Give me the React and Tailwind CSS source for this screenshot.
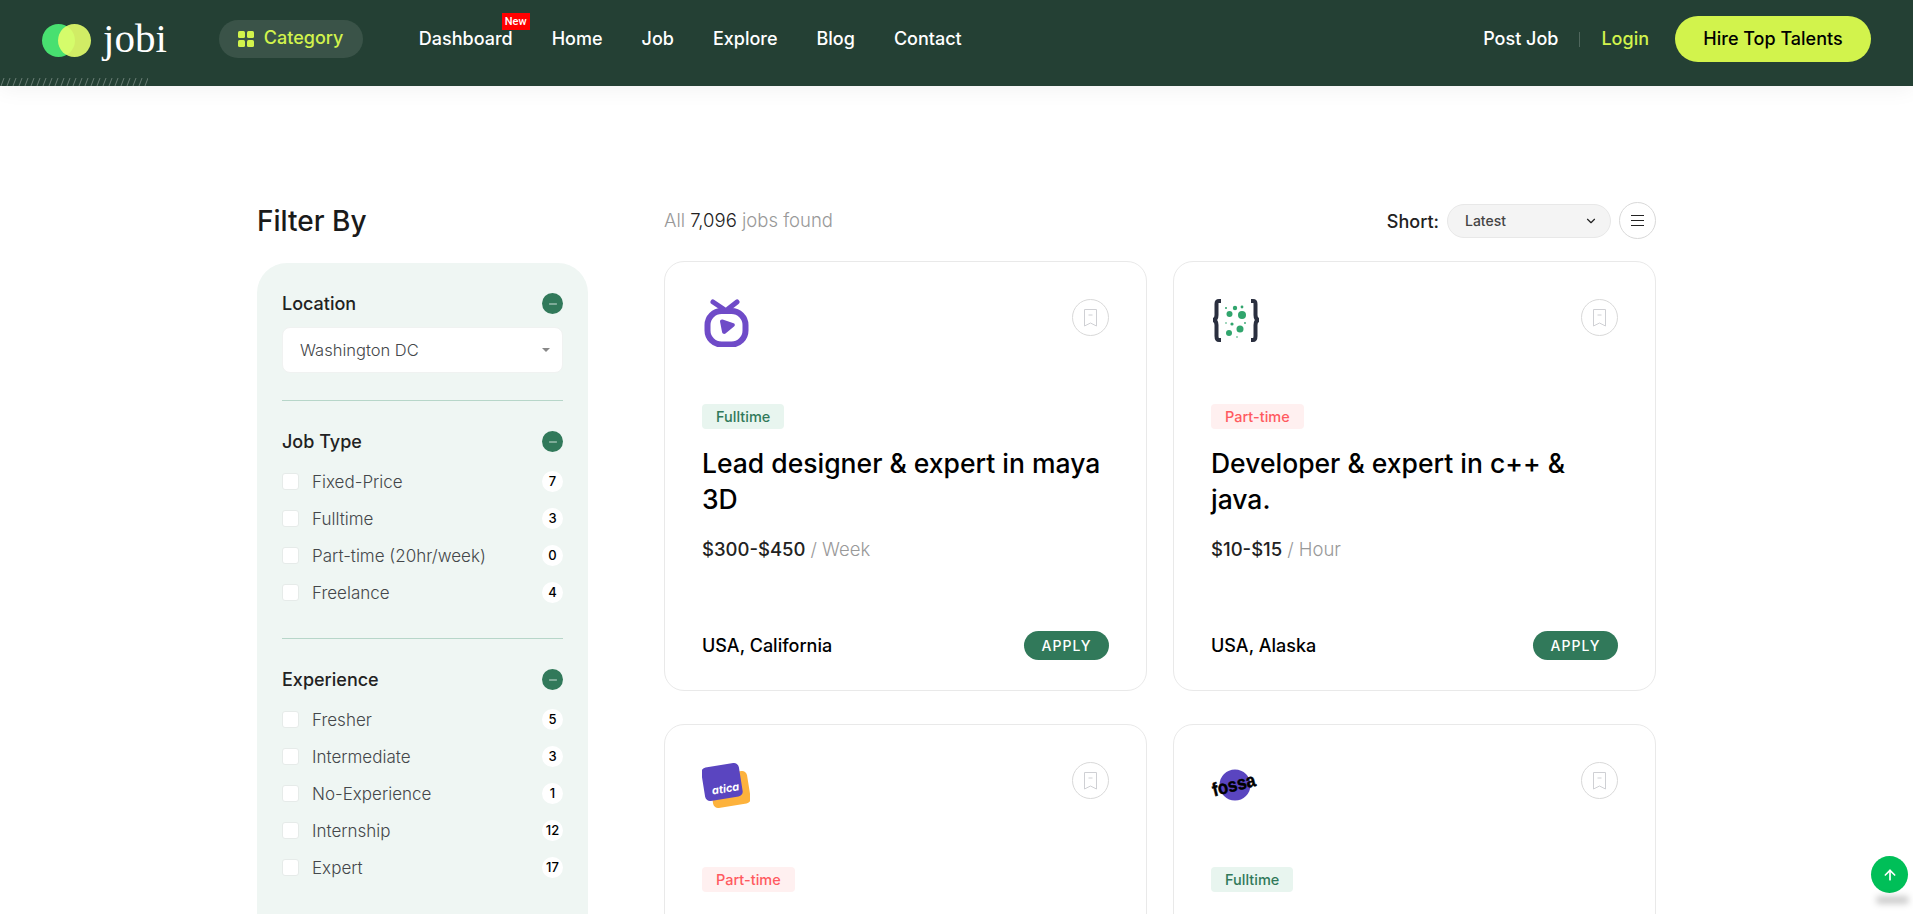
import React from "react";
import { ChevronDown, ArrowUp, Minus } from "lucide-react";

const NAV = ["Home", "Job", "Explore", "Blog", "Contact"];
const JOB_TYPES = [
  { label: "Fixed-Price", count: 7 },
  { label: "Fulltime", count: 3 },
  { label: "Part-time (20hr/week)", count: 0 },
  { label: "Freelance", count: 4 },
];
const EXPERIENCE = [
  { label: "Fresher", count: 5 },
  { label: "Intermediate", count: 3 },
  { label: "No-Experience", count: 1 },
  { label: "Internship", count: 12 },
  { label: "Expert", count: 17 },
];

const TvLogo = () => (
  <svg width="46" height="48" viewBox="0 0 46 48" fill="none">
    <path d="M9 3l12 8M33 3l-9 7" stroke="#6F4BC8" strokeWidth="5" strokeLinecap="round" />
    <rect x="3.500" y="12" width="38" height="33.500" rx="14" stroke="#6F4BC8" strokeWidth="6" />
    <path d="M16 22.500c0-1.500 1.200-2.300 2.600-1.900l11 3.600c1.500.5 1.700 2.400.4 3.300l-8.500 7c-1.300.9-3 .2-3.400-1.300z" fill="#6F4BC8" />
  </svg>
);

const CodeLogo = () => (
  <svg width="50" height="44" viewBox="0 0 50 44" fill="none">
    <path d="M10 2H8C6 2 5.500 3 5.500 5v11c0 3-1 4.500-3 5 2 .5 3 2 3 5v11c0 2 .5 4 2.500 4h2" stroke="#2A2F3F" strokeWidth="4" />
    <path d="M40 2h2c2 0 2.500 1 2.500 3v11c0 3 1 4.500 3 5-2 .5-3 2-3 5v11c0 2-.5 4-2.500 4h-2" stroke="#2A2F3F" strokeWidth="4" />
    <g fill="#31A56D">
      <circle cx="18.500" cy="15" r="3" />
      <circle cx="24" cy="9" r="2.200" />
      <circle cx="31" cy="16" r="4" />
      <circle cx="31" cy="8" r="1.400" />
      <circle cx="15" cy="9" r="1" />
      <circle cx="21" cy="25" r="1.600" />
      <circle cx="29" cy="30" r="3.500" />
      <circle cx="18" cy="34" r="3" />
      <circle cx="15" cy="24" r="0.800" />
      <circle cx="34" cy="24" r="0.900" />
      <circle cx="26" cy="38" r="0.800" />
    </g>
  </svg>
);

const AticaLogo = () => (
  <svg width="48" height="47" viewBox="0 0 48 47">
    <rect x="9" y="11" width="38" height="33" rx="5" fill="#FDB23C" transform="rotate(-9 28 27)" />
    <rect x="1" y="3" width="38" height="34" rx="5" fill="#5A45C0" transform="rotate(-9 20 20)" />
    <text x="10" y="31" fontSize="11" fontWeight="700" fontStyle="italic" fill="#fff" transform="rotate(-9 20 28)">atica</text>
  </svg>
);

const FossaLogo = () => (
  <svg width="56" height="48" viewBox="-4 -7 56 48">
    <circle cx="24" cy="16" r="15.500" fill="#5A45C0" />
    <text x="1" y="22" fontSize="19" fontWeight="900" fontFamily="Liberation Sans" textLength="44" lengthAdjust="spacingAndGlyphs" fill="#000" stroke="#000" strokeWidth="0.500" transform="rotate(-14 24 17)">fossa</text>
  </svg>
);

const CARDS = [
  { logo: <TvLogo />, tag: "Fulltime", title: "Lead designer & expert in maya 3D", pay: "$300-$450", per: "Week", place: "USA, California", offset: "pl-[2px]" },
  { logo: <CodeLogo />, tag: "Part-time", title: "Developer & expert in c++ & java.", pay: "$10-$15", per: "Hour", place: "USA, Alaska" },
  { logo: <AticaLogo />, tag: "Part-time" },
  { logo: <FossaLogo />, tag: "Fulltime", offset: "-ml-[4px]" },
];

const Toggle = () => (
  <span className="flex h-[21px] w-[21px] items-center justify-center rounded-full bg-[#31795a] text-white">
    <Minus size={12} strokeWidth={1.500} />
  </span>
);

const FilterHead = ({ title }) => (
  <div className="flex h-[21px] items-center justify-between">
    <span className="pb-px text-[18px] font-medium text-[#222]">{title}</span>
    <Toggle />
  </div>
);

const FilterRows = ({ rows }) => (
  <div className="mt-[19px] flex flex-col gap-[16px]">
    {rows.map((row) => (
      <div key={row.label} className="flex h-[21px] items-center">
        <span className="h-[17px] w-[17px] rounded-[3px] border border-[#e6ebe9] bg-white" />
        <span className="ml-[13px] pt-px text-[17px] font-light leading-[21px] text-[#44474a]">{row.label}</span>
        <span className="ml-auto flex h-[21px] w-[21px] items-center justify-center rounded-full bg-white text-[13px] font-medium text-black">
          {row.count}
        </span>
      </div>
    ))}
  </div>
);

const JobCard = ({ job }) => {
  const isFull = job.tag === "Fulltime";
  return (
    <div className="flex h-[430px] flex-col rounded-[20px] border border-[#e9e9e9] bg-white px-[37px] pb-[30px] pt-[37px]">
      <div className="flex h-[105px] items-start justify-between">
        <div className={job.offset}>{job.logo}</div>
        <span className="flex h-[37px] w-[37px] items-center justify-center rounded-full border border-[#d9d9d9]">
          <svg width="13" height="18" viewBox="0 0 13 18" fill="none" stroke="#cfd0d4">
            <path d="M.5.500h12v16.500l-6-3-6 3z" />
            <path d="M4.500 6h4" />
          </svg>
        </span>
      </div>
      <span
        className={`flex h-[25px] w-fit items-center rounded-[4px] px-[14px] text-[14.500px] font-medium ${
          isFull ? "bg-[#e8f5ef] text-[#31795a]" : "bg-[#fff0f0] text-[#ff5a5f]"
        }`}
      >
        {job.tag}
      </span>
      {job.title && (
        <>
          <h3 className="mt-[16px] text-[26.500px] font-medium leading-[36px] text-black">{job.title}</h3>
          <p className="mt-[20px] text-[18.500px] font-medium leading-[24px] text-[#222]">
            {job.pay} <span className="font-light text-[#999]">/ {job.per}</span>
          </p>
          <div className="mt-auto flex items-center justify-between">
            <span className="text-[18px] font-medium text-black">{job.place}</span>
            <span className="flex h-[29px] w-[85px] items-center justify-center rounded-full bg-[#31795a] text-[14px] font-medium tracking-[1px] text-white">
              APPLY
            </span>
          </div>
        </>
      )}
    </div>
  );
};

export default function App() {
  return (
    <div className="relative h-screen overflow-hidden bg-white font-[Inter,sans-serif] text-[#222]">
      {/* Header */}
      <header className="relative z-10 flex h-[86px] items-center bg-[#244034] pb-[8px] pl-[42px] pr-[42px] shadow-[0_4px_20px_rgba(0,0,0,0.05)]">
        <div className="flex items-center">
          <div className="flex pt-[3px]">
            <span className="h-[33px] w-[33px] rounded-full bg-[#48e070]" />
            <span className="-ml-[17px] h-[33px] w-[33px] rounded-full bg-[#e4ff6a]/90" />
          </div>
          <span className="-mt-[2px] ml-[12px] font-['Liberation_Serif',serif] text-[41px] leading-none text-white">jobi</span>
        </div>
        <div className="ml-[52px] flex h-[38px] w-[144px] items-center rounded-full bg-[#3a5348] pl-[19px] text-[18px] font-medium text-[#d2f34c]">
          <svg width="16" height="16" viewBox="0 0 16 16" fill="#d2f34c">
            <rect width="7" height="7" rx="1.500" />
            <rect x="9" width="7" height="7" rx="1.500" />
            <rect y="9" width="7" height="7" rx="1.500" />
            <rect x="9" y="9" width="7" height="7" rx="1.500" />
          </svg>
          <span className="ml-[10px] pb-[3px]">Category</span>
        </div>
        <nav className="ml-[56px] flex items-center gap-[39px] pb-[2px] text-[18px] font-medium text-white">
          <span className="relative">
            Dashboard
            <span className="absolute -right-[17px] -top-[12px] bg-[#f00] px-[3px] font-['Roboto',sans-serif] text-[11px] leading-[17px] text-white">New</span>
          </span>
          {NAV.map((item) => (
            <span key={item}>{item}</span>
          ))}
        </nav>
        <div className="ml-auto flex items-center text-[18px] font-medium">
          <span className="pb-[2px] text-white">Post Job</span>
          <span className="mx-[21px] h-[15px] w-px bg-white/20" />
          <span className="pb-[2px] text-[#d2f34c]">Login</span>
          <span className="ml-[26px] flex h-[46px] w-[196px] items-center justify-center rounded-[25px] bg-[#d2f34c] pb-[2px] text-black">Hire Top Talents</span>
        </div>
        <svg className="absolute bottom-0 left-0" width="148" height="8">
          <defs>
            <pattern id="hatch" width="6" height="8" patternUnits="userSpaceOnUse">
              <path d="M1 8l3-8" stroke="#ffffff" strokeOpacity="0.3" />
            </pattern>
          </defs>
          <rect width="148" height="8" fill="url(#hatch)" />
        </svg>
      </header>

      <main className="mx-auto flex w-[1399px] gap-[76px] pt-[116px]">
        {/* Sidebar */}
        <aside className="w-[331px]">
          <h2 className="h-[37px] pt-px text-[28px] font-medium leading-[37px] text-[#1a1a1a]">Filter By</h2>
          <div className="mt-[24px] rounded-[30px] bg-[#eff6f3] px-[25px] pb-[80px] pt-[30px]">
            <FilterHead title="Location" />
            <div className="mt-[13px] flex h-[46px] items-center justify-between rounded-[8px] border border-[#f0f2f1] bg-white pl-[17px] pr-[12px] text-[16.500px] font-light text-[#44474a]">
              Washington DC
              <span className="h-0 w-0 border-x-[4px] border-t-[4px] border-x-transparent border-t-[#888]" />
            </div>
            <div className="mt-[27px] h-px bg-[#b7d6c9]" />

            <div className="mt-[30px]">
              <FilterHead title="Job Type" />
            </div>
            <FilterRows rows={JOB_TYPES} />
            <div className="mt-[35px] h-px bg-[#b7d6c9]" />

            <div className="mt-[30px]">
              <FilterHead title="Experience" />
            </div>
            <FilterRows rows={EXPERIENCE} />
          </div>
        </aside>

        {/* Job list */}
        <section className="w-[992px]">
          <div className="flex h-[37px] items-center justify-between">
            <p className="pt-px text-[18.500px] font-light text-[#999]">
              All <span className="text-[#222]">7,096</span> jobs found
            </p>
            <div className="flex items-center">
              <span className="pt-px text-[18px] font-medium text-[#222]">Short:</span>
              <div className="ml-[8px] flex h-[34px] w-[164px] items-center justify-between rounded-full border border-[#e8e8e8] bg-[#f4f4f4] pl-[17px] pr-[12px] text-[14px] font-medium text-[#444]">
                Latest
                <ChevronDown size={14} className="text-[#222]" />
              </div>
              <span className="ml-[8px] flex h-[37px] w-[37px] flex-col items-center justify-center gap-[4px] rounded-full border border-[#d9d9d9]">
                <span className="h-px w-[13px] bg-[#222]" />
                <span className="h-px w-[13px] bg-[#222]" />
                <span className="h-px w-[13px] bg-[#222]" />
              </span>
            </div>
          </div>
          <div className="mt-[22px] grid grid-cols-2 gap-x-[26px] gap-y-[33px]">
            {CARDS.map((job, i) => (
              <JobCard key={i} job={job} />
            ))}
          </div>
        </section>
      </main>

      {/* Scroll to top */}
      <div className="absolute bottom-[21px] right-[5px] flex h-[37px] w-[37px] items-center justify-center rounded-full bg-[#00bf58] text-white">
        <ArrowUp size={16} strokeWidth={2.500} />
      </div>
      <div className="absolute bottom-[10px] right-[4px] h-[8px] w-[33px] rounded-full bg-black/20 blur-[3px]" />
    </div>
  );
}
